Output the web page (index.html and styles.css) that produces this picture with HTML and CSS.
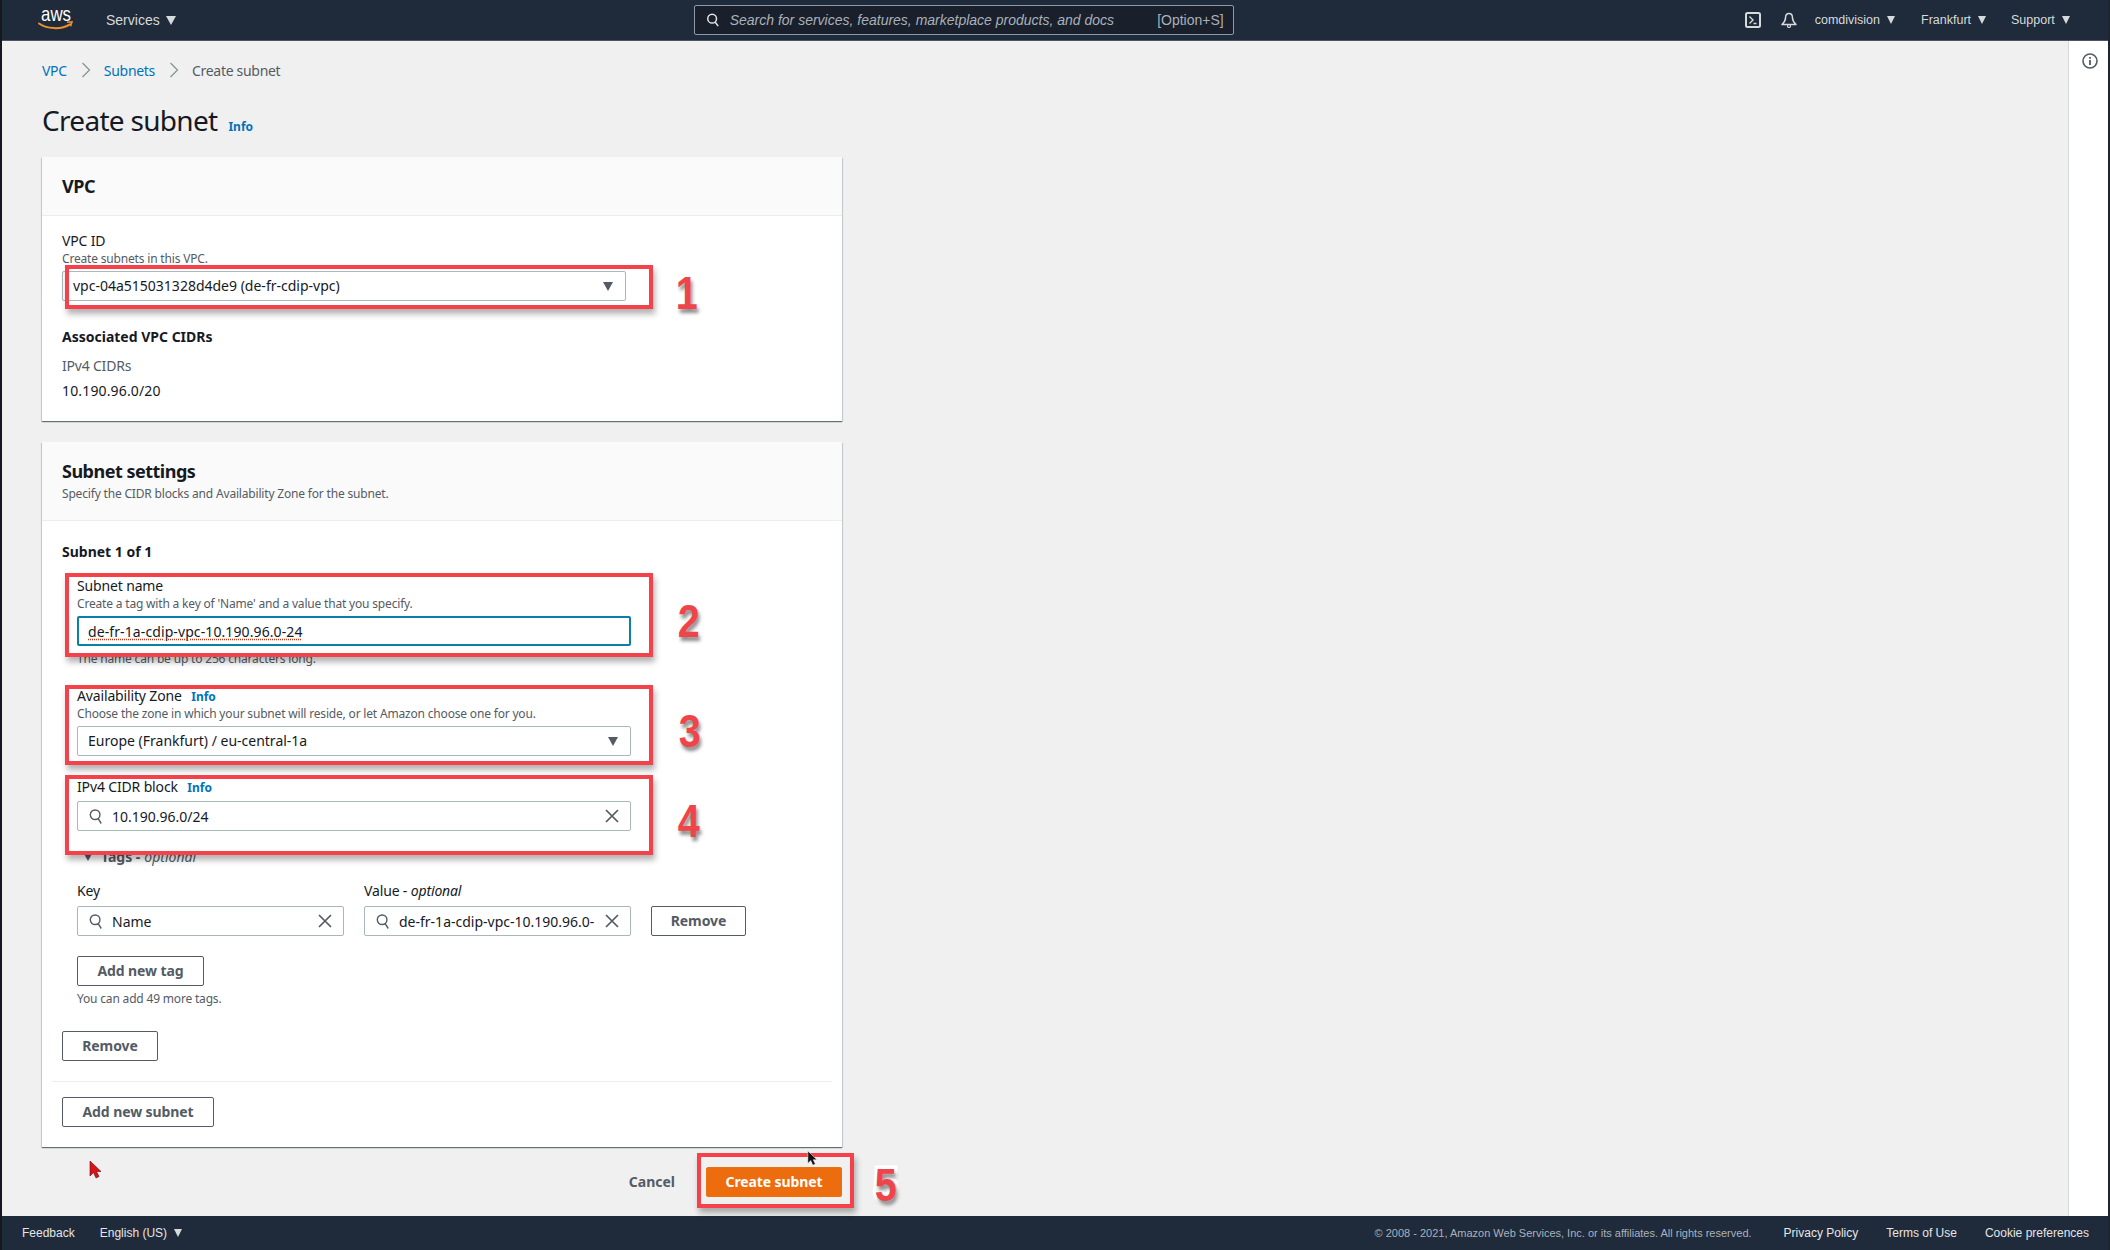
FILE: index.html
```html
<!DOCTYPE html>
<html lang="en">
<head>
<meta charset="utf-8">
<title>Create subnet</title>
<link rel="stylesheet" href="styles.css">
</head>
<body>
<div class="app">
  <header class="topbar">
    <svg class="aws" viewBox="0 0 36 40" width="36" height="40" aria-hidden="true">
      <path d="M1 23.500c8 5.500 22 6.500 31 .8" fill="none" stroke="#ec912d" stroke-width="2" stroke-linecap="round"/>
      <path d="M29 22.300l5-.5-1.400 4.600" fill="none" stroke="#ec912d" stroke-width="1.500"/>
      <text x="3" y="21" class="aws-text" textLength="30" lengthAdjust="spacingAndGlyphs">aws</text>
    </svg>
    <span class="nav-item services">Services</span><span class="tri"></span>
    <div class="search">
      <svg class="ico-search" viewBox="0 0 16 16" width="14" height="16" aria-hidden="true"><circle cx="7" cy="6.500" r="5" fill="none" stroke="#e6e6e6" stroke-width="1.700"/><path d="M10.500 10.500L14 15" stroke="#e6e6e6" stroke-width="1.700"/></svg>
      <span class="placeholder">Search for services, features, marketplace products, and docs</span>
      <span class="shortcut">[Option+S]</span>
    </div>
    <div class="top-right">
      <svg class="terminal" viewBox="0 0 16 16" width="16" height="16" aria-hidden="true"><rect x="1" y="1" width="14" height="14" rx="1.500" fill="none" stroke="#d5dbdb" stroke-width="2"/><path d="M4.500 4.500L8 8l-3.500 3.500M8.500 11.500h3" fill="none" stroke="#d5dbdb" stroke-width="1.400"/></svg>
      <svg class="bell" viewBox="0 0 16 16" width="16" height="16" aria-hidden="true"><path d="M8 1.500C5.500 1.500 4.500 3.500 4.500 6c0 3-1.500 4.500-3.500 6.500h14c-2-2-3.500-3.500-3.500-6.500 0-2.500-1-4.500-3.500-4.500z" fill="none" stroke="#d5dbdb" stroke-width="1.500" stroke-linejoin="round"/><circle cx="8" cy="14" r="1.500" fill="none" stroke="#d5dbdb" stroke-width="1.200"/></svg>
      <span class="nav-item user">comdivision</span><span class="tri tri-sm"></span>
      <span class="nav-item region">Frankfurt</span><span class="tri tri-sm"></span>
      <span class="nav-item support">Support</span><span class="tri tri-sm"></span>
    </div>
  </header>

  <div class="body-row">
    <main class="content">
      <nav class="crumbs">
        <a class="link">VPC</a>
        <svg class="chev" viewBox="0 0 10 16" width="10" height="16" aria-hidden="true"><path d="M1.500 1l7 7-7 7" fill="none" stroke="#879596" stroke-width="1.300"/></svg>
        <a class="link">Subnets</a>
        <svg class="chev" viewBox="0 0 10 16" width="10" height="16" aria-hidden="true"><path d="M1.500 1l7 7-7 7" fill="none" stroke="#879596" stroke-width="1.300"/></svg>
        <span class="crumb-current">Create subnet</span>
      </nav>
      <div class="title-row"><h1>Create subnet</h1><a class="info">Info</a></div>

      <section class="card">
        <div class="card-head vpc-head"><h2>VPC</h2></div>
        <div class="card-body vpc-body">
          <div class="label">VPC ID</div>
          <div class="desc">Create subnets in this VPC.</div>
          <div class="field field-vpc field-select"><span class="value">vpc-04a515031328d4de9 (de-fr-cdip-vpc)</span><span class="tri tri-dark"></span></div>
          <h3 class="assoc">Associated VPC CIDRs</h3>
          <div class="sublabel">IPv4 CIDRs</div>
          <div class="cidr-value">10.190.96.0/20</div>
        </div>
      </section>

      <section class="card card-second">
        <div class="card-head subnet-head">
          <h2>Subnet settings</h2>
          <div class="desc head-desc">Specify the CIDR blocks and Availability Zone for the subnet.</div>
        </div>
        <div class="card-body subnet-body">
          <h3>Subnet 1 of 1</h3>
          <div class="indent">
            <div class="label m16">Subnet name</div>
            <div class="desc">Create a tag with a key of 'Name' and a value that you specify.</div>
            <div class="field field-focus"><span class="value squiggle">de-fr-1a-cdip-vpc-10.190.96.0-24</span></div>
            <div class="desc m4">The name can be up to 256 characters long.</div>

            <div class="label m19">Availability Zone <a class="info info-inline">Info</a></div>
            <div class="desc">Choose the zone in which your subnet will reside, or let Amazon choose one for you.</div>
            <div class="field field-select"><span class="value">Europe (Frankfurt) / eu-central-1a</span><span class="tri tri-dark"></span></div>

            <div class="label m22">IPv4 CIDR block <a class="info info-inline">Info</a></div>
            <div class="field field-search m5">
              <svg class="ico-field" viewBox="0 0 16 18" width="14" height="17" aria-hidden="true"><circle cx="7" cy="7" r="5.500" fill="none" stroke="#545b64" stroke-width="1.600"/><path d="M10.500 11.500L14 17" stroke="#545b64" stroke-width="1.600"/></svg>
              <span class="value">10.190.96.0/24</span>
              <svg class="ico-x" viewBox="0 0 14 14" width="14" height="14" aria-hidden="true"><path d="M1 1l12 12M13 1L1 13" stroke="#545b64" stroke-width="1.700"/></svg>
            </div>

            <div class="tags-toggle"><span class="tri tri-dark tri-tags"></span><b>Tags -</b> <i>optional</i></div>
            <div class="tag-row">
              <div class="tag-col">
                <div class="label">Key</div>
                <div class="field field-search m6">
                  <svg class="ico-field" viewBox="0 0 16 18" width="14" height="17" aria-hidden="true"><circle cx="7" cy="7" r="5.500" fill="none" stroke="#545b64" stroke-width="1.600"/><path d="M10.500 11.500L14 17" stroke="#545b64" stroke-width="1.600"/></svg>
                  <span class="value">Name</span>
                  <svg class="ico-x" viewBox="0 0 14 14" width="14" height="14" aria-hidden="true"><path d="M1 1l12 12M13 1L1 13" stroke="#545b64" stroke-width="1.700"/></svg>
                </div>
              </div>
              <div class="tag-col">
                <div class="label">Value - <i>optional</i></div>
                <div class="field field-search m6">
                  <svg class="ico-field" viewBox="0 0 16 18" width="14" height="17" aria-hidden="true"><circle cx="7" cy="7" r="5.500" fill="none" stroke="#545b64" stroke-width="1.600"/><path d="M10.500 11.500L14 17" stroke="#545b64" stroke-width="1.600"/></svg>
                  <span class="value">de-fr-1a-cdip-vpc-10.190.96.0-</span>
                  <svg class="ico-x" viewBox="0 0 14 14" width="14" height="14" aria-hidden="true"><path d="M1 1l12 12M13 1L1 13" stroke="#545b64" stroke-width="1.700"/></svg>
                </div>
              </div>
              <button class="btn btn-remove-tag">Remove</button>
            </div>
            <button class="btn btn-add-tag">Add new tag</button>
            <div class="desc m4">You can add 49 more tags.</div>
          </div>
          <button class="btn btn-remove">Remove</button>
          <div class="divider"></div>
          <button class="btn btn-add-subnet">Add new subnet</button>
        </div>
      </section>

      <div class="actions">
        <a class="cancel">Cancel</a>
        <button class="btn-primary">Create subnet</button>
      </div>
    </main>
    <aside class="tools">
      <svg viewBox="0 0 16 16" width="16" height="16" aria-hidden="true"><circle cx="8" cy="8" r="7" fill="none" stroke="#545b64" stroke-width="1.600"/><path d="M8 7v5M8 4v1.800" stroke="#545b64" stroke-width="1.800"/></svg>
    </aside>
  </div>

  <footer class="footbar">
    <span class="foot-item feedback">Feedback</span>
    <span class="foot-item lang">English (US)</span><span class="tri tri-sm"></span>
    <div class="foot-right">
      <span class="copy">© 2008 - 2021, Amazon Web Services, Inc. or its affiliates. All rights reserved.</span>
      <span class="foot-item">Privacy Policy</span>
      <span class="foot-item">Terms of Use</span>
      <span class="foot-item">Cookie preferences</span>
    </div>
  </footer>
</div>

<div class="mark box1"></div>
<div class="mark box2"></div>
<div class="mark box3"></div>
<div class="mark box4"></div>
<div class="mark box5"></div>
<span class="num num1">1</span>
<span class="num num2">2</span>
<span class="num num3">3</span>
<span class="num num4">4</span>
<span class="num num5">5</span>
<svg class="cursor cursor-red" viewBox="0 0 12 18" width="12" height="18" aria-hidden="true"><path d="M1 0v15l3.500-3.500L7 17l3-1.500-2.500-5H12z" fill="#d8141a" stroke="#5c0a0a" stroke-width=".6"/></svg>
<svg class="cursor cursor-black" viewBox="0 0 12 18" width="10" height="15" aria-hidden="true"><path d="M1 0v15l3.500-3.500L7 17l3-1.500-2.500-5H12z" fill="#111" stroke="#fff" stroke-width=".6"/></svg>
</body>
</html>
```

FILE: styles.css
```css
* { box-sizing: border-box; }
html, body { margin: 0; height: 1250px; overflow: hidden; }
body {
  position: relative;
  font-family: "Noto Sans", sans-serif;
  font-size: 14px;
  color: #16191f;
  background: #f0f0f0;
}
.app { display: flex; flex-direction: column; height: 1250px; border-left: 2px solid #15181e; border-right: 2px solid #1c2530; }

.topbar {
  height: 41px;
  flex: none;
  display: flex;
  align-items: center;
  background: #1f2a3a;
  border-bottom: 1px solid #4b5563;
  padding-left: 36px;
  font-family: "Liberation Sans", sans-serif;
  color: #d5dbdb;
  font-size: 14px;
}
.aws { flex: none; }
.aws-text { font: 21px "Liberation Sans", sans-serif; fill: #fff; }
.nav-item { white-space: nowrap; }
.services { margin-left: 32px; }
.tri {
  display: inline-block;
  width: 0; height: 0;
  margin-left: 6px;
  border-left: 5px solid transparent;
  border-right: 5px solid transparent;
  border-top: 9px solid #d5dbdb;
}
.tri-sm { border-left-width: 4.500px; border-right-width: 4.500px; border-top-width: 8px; margin-left: 7px; }
.search {
  display: flex;
  align-items: center;
  width: 540px;
  height: 30px;
  margin-left: 518px;
  padding: 0 9px 0 11px;
  background: #191f2b;
  border: 1px solid #8d99a8;
  border-radius: 2px;
}
.placeholder { margin-left: 10px; font-style: italic; color: #a9b1ba; font-size: 14px; white-space: nowrap; }
.shortcut { margin-left: auto; color: #a9b1ba; font-size: 14px; }
.top-right { display: flex; align-items: center; margin-left: 511px; font-size: 12.500px; }
.bell { margin-left: 20px; }
.user { margin-left: 18px; }
.region { margin-left: 26px; }
.support { margin-left: 25px; }

.body-row { flex: 1; display: flex; min-height: 0; }
.content { flex: 1; padding-left: 40px; }
.tools {
  flex: none;
  width: 40px;
  background: #fff;
  border-left: 1px solid #d5dbdb;
  padding: 12px 0 0 13px;
}

.crumbs { display: flex; align-items: center; height: 20px; margin-top: 19px; font-size: 14px; letter-spacing: -.3px; }
.link { color: #0073bb; }
.chev { margin: 0 13px 0 14px; }
.crumb-current { color: #545b64; }

.title-row { display: flex; align-items: baseline; margin-top: 20px; height: 42px; }
h1 { margin: 0; font-size: 28px; font-weight: 400; line-height: 41px; letter-spacing: -.7px; }
.info { color: #0073bb; font-size: 12px; font-weight: 700; margin-left: 11px; letter-spacing: 0; }
.info-inline { margin-left: 6px; }

.card {
  width: 800px;
  margin-top: 15px;
  background: #fff;
  box-shadow: 0 1px 1px 0 rgba(0, 28, 36, .5), 1px 1px 1px 0 rgba(0, 28, 36, .1), -1px 1px 1px 0 rgba(0, 28, 36, .1);
}
.card-second { margin-top: 21px; }
.card-head { background: #fafafa; border-bottom: 1px solid #eaeded; padding: 0 20px; }
.vpc-head { height: 59px; padding-top: 17px; }
.subnet-head { height: 79px; padding-top: 17px; }
h2 { margin: 0; font-size: 18px; font-weight: 700; line-height: 24px; letter-spacing: -.5px; }
.head-desc { margin-top: 2px; }
.card-body { padding: 0 20px; }
.vpc-body { padding-top: 16px; padding-bottom: 21px; }
.subnet-body { padding-top: 22px; padding-bottom: 20px; }

.label { height: 18px; line-height: 18px; font-size: 14px; letter-spacing: -.15px; }
.desc { height: 18px; line-height: 18px; font-size: 12px; color: #545b64; letter-spacing: -.18px; }
h3 { margin: 0; font-size: 14px; font-weight: 700; line-height: 18px; }
.assoc { margin-top: 27px; }
.sublabel { margin-top: 11px; line-height: 18px; color: #545b64; letter-spacing: -.2px; }
.cidr-value { margin-top: 7px; line-height: 18px; letter-spacing: .15px; }

.field {
  display: flex;
  align-items: center;
  height: 30px;
  margin-top: 3px;
  padding: 0 12px 0 10px;
  background: #fff;
  border: 1px solid #aab7b8;
  border-radius: 2px;
}
.field-vpc { width: 564px; }
.field-focus { border: 2px solid #0a7fa8; padding-left: 9px; }
.field-search { padding-left: 11px; padding-right: 11px; }
.field-select .value { margin-top: -2px; }
.value { white-space: nowrap; }
.squiggle { text-decoration: underline dotted #d13212; text-underline-offset: 2px; letter-spacing: .1px; }
.tri-dark { margin-left: auto; border-top-color: #545b64; }
.ico-field { flex: none; margin-right: 9px; }
.ico-x { flex: none; margin-left: auto; }

.indent { width: 554px; margin-left: 15px; }
.m16 { margin-top: 16px; }
.m4 { margin-top: 4px; }
.m19 { margin-top: 19px; }
.m22 { margin-top: 22px; }
.m5 { margin-top: 5px; }
.m6 { margin-top: 6px; }

.tags-toggle { display: flex; align-items: center; gap: 4px; margin-top: 16px; height: 18px; padding-left: 6px; color: #545b64; white-space: pre; }
.tri-tags { margin: 0 4px 0 0; }
.tag-row { display: flex; margin-top: 17px; gap: 20px; align-items: flex-end; }
.tag-col { width: 267px; flex: none; }

.btn {
  display: block;
  height: 30px;
  padding: 0 0 2px;
  background: #fff;
  border: 1px solid #545b64;
  border-radius: 2px;
  font: 700 14px "Noto Sans", sans-serif;
  letter-spacing: -.1px;
  color: #545b64;
}
.btn-remove-tag { width: 95px; flex: none; }
.btn-add-tag { margin-top: 20px; width: 127px; }
.btn-remove { margin-top: 23px; width: 96px; }
.divider { height: 1px; margin: 20px -10px 15px; background: #eaeded; }
.btn-add-subnet { width: 152px; }

.actions { width: 800px; display: flex; align-items: center; justify-content: flex-end; gap: 31px; margin-top: 20px; }
.cancel { font-weight: 700; color: #545b64; margin-top: -2px; }
.btn-primary {
  width: 136px;
  height: 30px;
  padding: 0 0 2px;
  border: 1px solid #ec7211;
  border-radius: 2px;
  background: #ec6c0e;
  color: #fff;
  font: 700 14px "Noto Sans", sans-serif;
  letter-spacing: -.1px;
}

.footbar {
  flex: none;
  height: 34px;
  display: flex;
  align-items: center;
  background: #1f2a3a;
  padding-left: 20px;
  font-family: "Liberation Sans", sans-serif;
  font-size: 12px;
  color: #e6e6e6;
}
.lang { margin-left: 25px; }
.foot-right { margin-left: auto; display: flex; align-items: center; gap: 28px; padding-right: 19px; font-size: 12px; }
.copy { font-size: 11px; color: #aab2bb; margin-right: 4px; }

.mark {
  position: absolute;
  left: 65px;
  width: 588px;
  border: 4px solid #f5414a;
  box-shadow: 2px 5px 6px rgba(0, 0, 0, .3);
}
.box1 { top: 265px; height: 44px; }
.box2 { top: 573px; height: 84px; }
.box3 { top: 685px; height: 80px; }
.box4 { top: 775px; height: 80px; }
.box5 { top: 1153px; left: 697px; width: 157px; height: 55px; }
.num {
  position: absolute;
  font: 700 46px/44px "Liberation Sans", sans-serif;
  color: #f0444b;
  -webkit-text-stroke: 7px #fff;
  paint-order: stroke fill;
  text-shadow: 2px 4px 4px rgba(0, 0, 0, .45);
  transform: scaleX(.86);
}
.num1 { left: 674px; top: 271px; }
.num2 { left: 676px; top: 599px; }
.num3 { left: 677px; top: 709px; }
.num4 { left: 676px; top: 799px; }
.num5 { left: 873px; top: 1163px; }
.cursor { position: absolute; }
.cursor-red { left: 89px; top: 1161px; }
.cursor-black { left: 807px; top: 1151px; }
```
